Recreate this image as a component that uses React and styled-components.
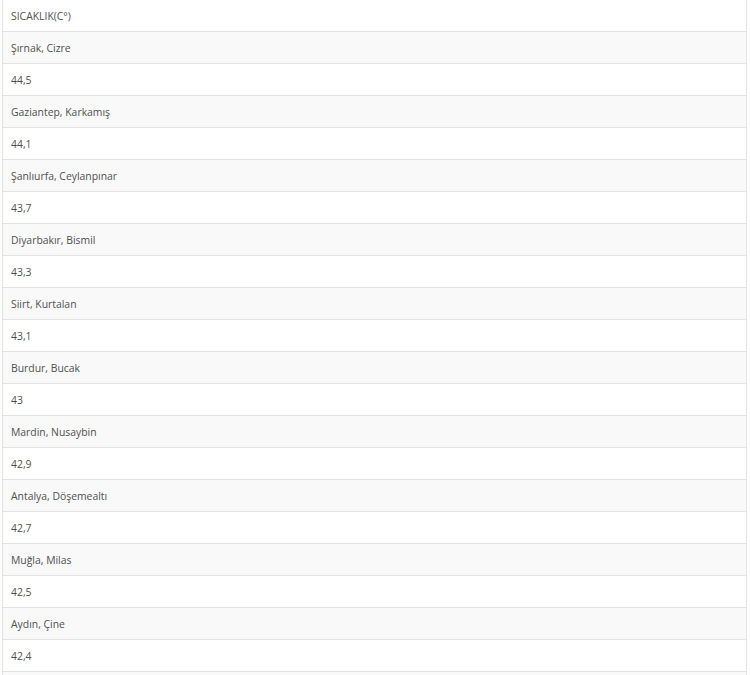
import React from "react";
import styled, { createGlobalStyle } from "styled-components";

const GlobalStyle = createGlobalStyle`
  body {
    margin: 0;
    background: #fff;
    font-family: "Open Sans", "Noto Sans", sans-serif;
  }
`;

const Wrapper = styled.div`
  padding-left: 2px;
  width: 745px;
`;

const Table = styled.table`
  width: 100%;
  border-collapse: collapse;
  border-left: 1px solid #e3e3e3;
  border-right: 1px solid #e3e3e3;
`;

const Row = styled.tr`
  background: ${(p) => (p.$striped ? "#f9f9f9" : "#fff")};
`;

const Cell = styled.td`
  height: 31px;
  padding: 0 8px;
  border-bottom: 1px solid #e3e3e3;
  font-size: 10.4px;
  color: #505050;
  vertical-align: middle;
`;

const rows = [
  "SICAKLIK(C°)",
  "Şırnak, Cizre",
  "44,5",
  "Gaziantep, Karkamış",
  "44,1",
  "Şanlıurfa, Ceylanpınar",
  "43,7",
  "Diyarbakır, Bismil",
  "43,3",
  "Siirt, Kurtalan",
  "43,1",
  "Burdur, Bucak",
  "43",
  "Mardin, Nusaybin",
  "42,9",
  "Antalya, Döşemealtı",
  "42,7",
  "Muğla, Milas",
  "42,5",
  "Aydın, Çine",
  "42,4",
  "",
];

const App = () => (
  <Wrapper>
    <GlobalStyle />
    <Table>
      <tbody>
        {rows.map((r, i) => (
          <Row key={i} $striped={i % 2 === 1}>
            <Cell>{r}</Cell>
          </Row>
        ))}
      </tbody>
    </Table>
  </Wrapper>
);

export default App;
